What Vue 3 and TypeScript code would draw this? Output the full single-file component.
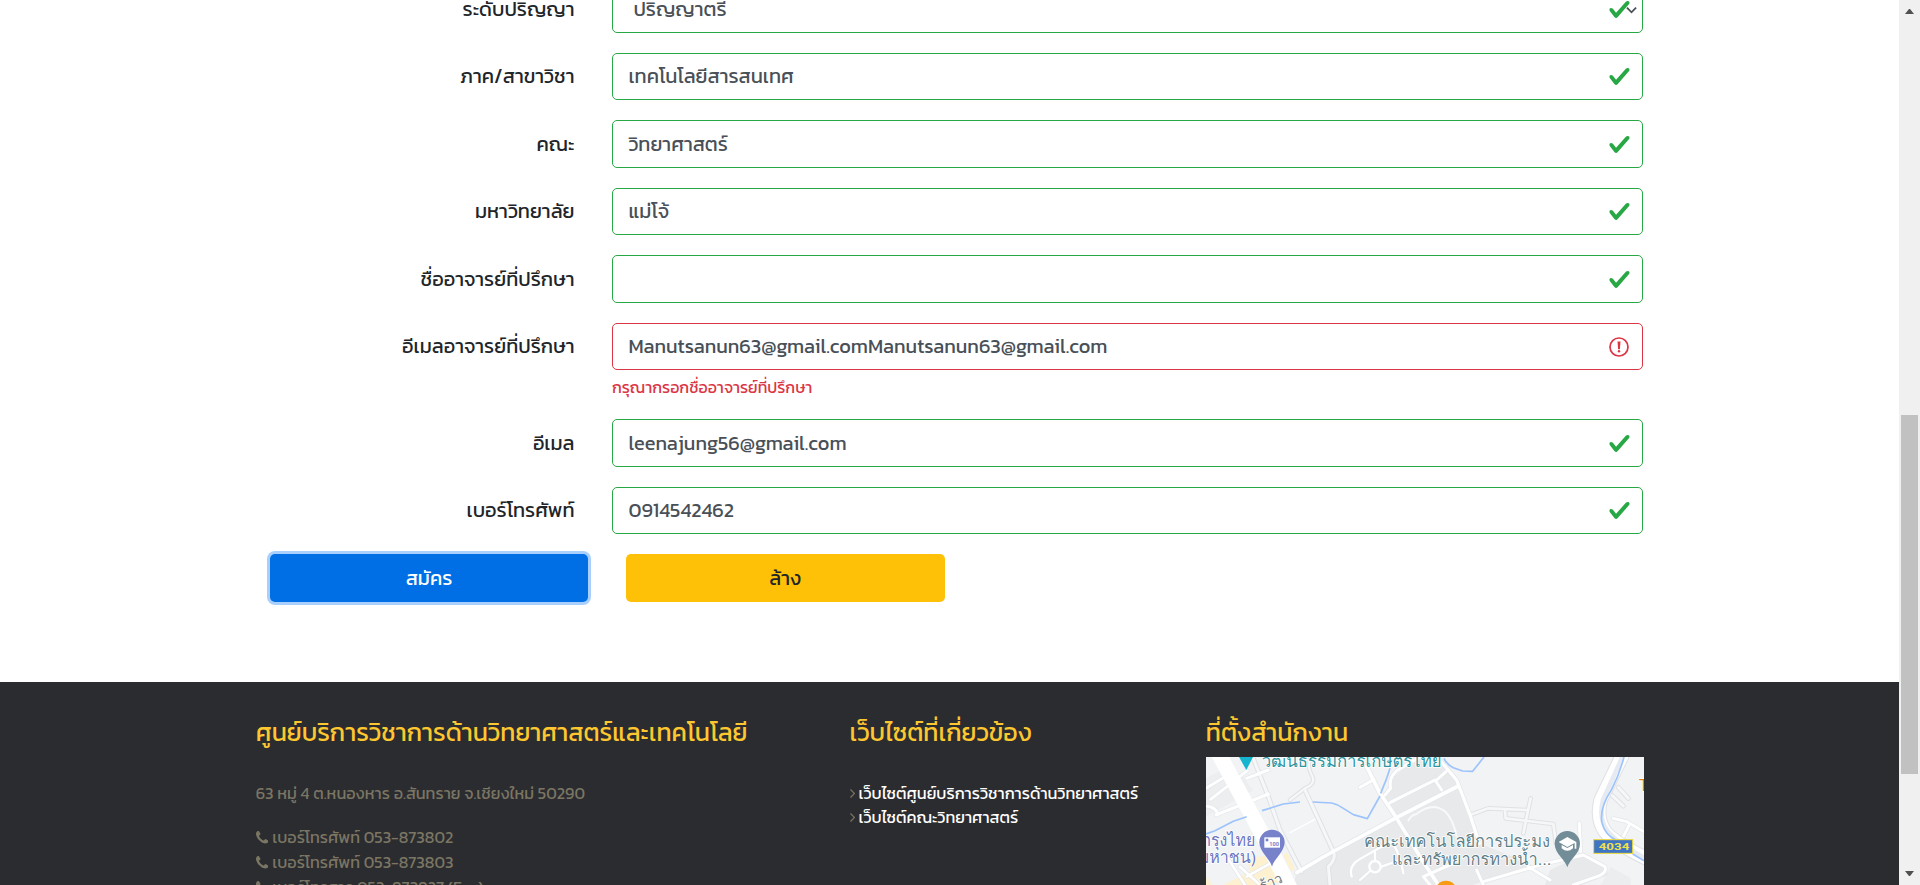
<script setup lang="ts">
interface Field {
  label: string
  value: string
  select?: boolean
  error?: string
}

interface Road {
  d: string
  width: number
}

const fields: Field[] = [
  { label: 'ระดับปริญญา', value: 'ปริญญาตรี', select: true },
  { label: 'ภาค/สาขาวิชา', value: 'เทคโนโลยีสารสนเทศ' },
  { label: 'คณะ', value: 'วิทยาศาสตร์' },
  { label: 'มหาวิทยาลัย', value: 'แม่โจ้' },
  { label: 'ชื่ออาจารย์ที่ปรึกษา', value: '' },
  {
    label: 'อีเมลอาจารย์ที่ปรึกษา',
    value: 'Manutsanun63@gmail.comManutsanun63@gmail.com',
    error: 'กรุณากรอกชื่ออาจารย์ที่ปรึกษา',
  },
  { label: 'อีเมล', value: 'leenajung56@gmail.com' },
  { label: 'เบอร์โทรศัพท์', value: '0914542462' },
]

const phones = [
  'เบอร์โทรศัพท์ 053-873802',
  'เบอร์โทรศัพท์ 053-873803',
  'เบอร์โทรสาร 053-873827 (Fax)',
]

const links = [
  'เว็บไซต์ศูนย์บริการวิชาการด้านวิทยาศาสตร์',
  'เว็บไซต์คณะวิทยาศาสตร์',
]

const lanes: Road[] = [
  { d: 'M188 171L235 290 270 390 335 515', width: 9 },
  { d: 'M345 270L430 455Q440 475 415 500L420 555', width: 9 },
  { d: 'M362 171Q350 200 365 225T345 265L300 300', width: 7 },
  { d: 'M840 345L895 325 1010 330M1022 295L1010 350 1000 400M945 330L947 355 1090 372 1098 430', width: 8 },
  { d: 'M1265 285L1300 318M1285 262L1315 295', width: 9 },
]

const streets: Road[] = [
  { d: 'M48 265L125 218 95 171M62 298L172 212M78 345L235 282M170 235L235 210M48 318Q78 322 82 340', width: 9 },
  { d: 'M150 500L210 555M110 470L165 555M170 530L260 480', width: 8 },
  { d: 'M320 518L410 465 615 355 805 258', width: 11 },
  { d: 'M530 200L570 280 620 355 690 470 745 555', width: 11 },
  { d: 'M510 262L552 238M585 285L602 265Q595 235 620 212L690 171', width: 9 },
  { d: 'M600 308L735 240 755 270M740 240L768 215', width: 9 },
  { d: 'M745 175L800 240 840 345 868 430', width: 10 },
  { d: 'M485 530Q475 500 505 480L600 425Q625 440 640 520M510 540L555 500M555 480V455M575 500L630 480', width: 7 },
  { d: 'M880 545L1050 495 1180 465 1245 500Q1252 520 1220 530L1150 555M1015 500L1080 540M720 555L700 530 790 490M860 510L880 555', width: 9 },
  { d: 'M1168 370L1172 455', width: 9 },
  { d: 'M1270 355L1310 365 1362 395M1320 370L1300 410', width: 9 },
]
</script>

<template>
  <div class="window">
    <div class="page">
      <main class="container form">
        <div v-for="field in fields" :key="field.label" class="row">
          <label class="label">{{ field.label }}</label>
          <div class="control">
            <div class="input" :class="{ invalid: field.error, select: field.select }">
              <span>{{ field.value }}</span>
              <svg v-if="field.error" class="alert" viewBox="0 0 20 20">
                <circle cx="10" cy="10" r="9" fill="none" stroke="#dc3545" stroke-width="1.7" />
                <path d="M8.5 4.6h3l-.6 7.6H9.1z" fill="#dc3545" />
                <circle cx="10" cy="14.3" r="1.2" fill="#dc3545" />
              </svg>
              <svg v-else class="check" viewBox="0 0 8 8">
                <path fill="#28a745" d="M2.3 6.73L.6 4.53c-.4-1.04.46-1.4 1.1-.8l1.1 1.4 3.4-3.8c.6-.63 1.6-.27 1.2.7l-4 4.6c-.43.5-.8.4-1.1.1z" />
              </svg>
              <svg v-if="field.select" class="chevron" viewBox="0 0 12 8">
                <path d="M1 1.500l5 5 5-5" fill="none" stroke="#495057" stroke-width="2" />
              </svg>
            </div>
            <div v-if="field.error" class="error">{{ field.error }}</div>
          </div>
        </div>
        <div class="buttons">
          <button class="btn primary" type="button">สมัคร</button>
          <button class="btn warning" type="button">ล้าง</button>
        </div>
      </main>

      <footer class="footer">
        <div class="container columns">
          <section class="about">
            <h5>ศูนย์บริการวิชาการด้านวิทยาศาสตร์และเทคโนโลยี</h5>
            <p class="address">63 หมู่ 4 ต.หนองหาร อ.สันทราย จ.เชียงใหม่ 50290</p>
            <p v-for="phone in phones" :key="phone" class="phone">
              <svg viewBox="0 0 1408 1408">
                <path fill="#7b7663" d="M1408 1112q0 27-10 70.500t-21 68.500q-21 50-122 106-94 51-186 51-27 0-53-3.500t-57.500-12.500-47-14.500-55.500-20.500-49-18q-98-35-175-83-127-79-264-216T152 776q-48-77-83-175-3-9-18-49t-20.500-55.500-14.500-47T3.500 392 0 339q0-92 51-186Q107 52 157 31q25-11 68.500-21T296 0q14 0 21 3 18 6 53 76 11 19 30 54t35 63.500 31 53.500q3 4 17.500 25t21.500 35.500 7 28.500q0 20-28.500 50t-62 55-62 53-28.500 46q0 9 5 22.500t8.500 20.500 14 24 11.500 19q76 137 174 235t235 174q2 1 19 11.500t24 14 20.500 8.500 22.500 5q18 0 46-28.500t53-62 55-62 50-28.500q14 0 28.500 7t35.500 21.500 25 17.500q25 15 53.500 31t63.500 35 54 30q70 35 76 53 3 7 3 21z" />
              </svg>
              <span>{{ phone }}</span>
            </p>
          </section>
          <section class="sites">
            <h5>เว็บไซต์ที่เกี่ยวข้อง</h5>
            <ul>
              <li v-for="link in links" :key="link">
                <svg viewBox="0 0 5 9"><path d="M.5.5l4 4-4 4" fill="none" stroke="#7b7663" stroke-width="1.2" /></svg>
                <a>{{ link }}</a>
              </li>
            </ul>
          </section>
          <section class="office">
            <h5>ที่ตั้งสำนักงาน</h5>
            <svg class="map" viewBox="48 171 1314 384">
              <rect x="48" y="171" width="1314" height="384" fill="#f1f3f4" />
              <g fill="#e8e9eb">
                <path d="M600 240l85-69h60l55 69 68 190 100 40 50 25-170 60H310l10-37 300-163-35-60z" />
                <path d="M1080 510l100-45 65 35 10 25-80 30h-110z" />
                <path d="M48 235l77-40 65 75-142 80z" opacity=".5" />
                <path d="M1262 500l60 35v20h-90z" opacity=".6" />
              </g>
              <path d="M170 478l60-12 60 60-40 29H100l80-40zM280 465l12-8 22 50-10 8zM48 530l20 25H48z" fill="#fdf1cf" />
              <g fill="none" stroke-linecap="round" stroke-linejoin="round">
                <path v-for="road in lanes" :key="`edge-${road.d}`" :d="road.d" :stroke-width="road.width + 6" stroke="#dfe1e4" />
                <path v-for="road in streets" :key="`edge-${road.d}`" :d="road.d" :stroke-width="road.width + 4" stroke="#e3e5e8" />
                <path v-for="road in lanes" :key="road.d" :d="road.d" :stroke-width="road.width" stroke="#f6f7f8" />
                <path v-for="road in streets" :key="road.d" :d="road.d" :stroke-width="road.width" stroke="#fff" />
                <path d="M655 362Q663 345 680 342 730 303 768 337 790 360 800 410" stroke="#f8f9fa" stroke-width="6" />
                <path d="M80 150L180 335 250 465 305 575" stroke="#fff" stroke-width="46" />
                <path d="M300 398L375 358" stroke="#fff" stroke-width="4" />
                <path d="M1300 160L1232 300Q1218 355 1245 395 1275 430 1375 478" stroke="#dfe1e4" stroke-width="44" />
                <path d="M1300 160L1232 300Q1218 355 1245 395 1275 430 1375 478" stroke="#fff" stroke-width="38" />
                <path d="M1302 160L1239 300Q1226 355 1250 390 1280 430 1375 480" stroke="#e6ebf2" stroke-width="14" />
              </g>
              <circle cx="555" cy="500" r="17" fill="#e8e9eb" stroke="#fff" stroke-width="7" />
              <g fill="none" stroke="#9dc3fc" stroke-width="5" stroke-linejoin="round">
                <path d="M48 402L75 392 130 364 170 350M216 332L280 312 330 306M368 306L425 309Q445 313 460 325L490 344 532 356 570 288M572 280L590 235 600 205M762 175Q770 193 790 203L818 213 848 214 882 171" />
                <path d="M1302 171Q1288 225 1264 270 1228 325 1236 368 1245 405 1278 420M1328 462L1362 482" />
              </g>
              <path d="M147 171h42l-20 39z" fill="#16b5cf" />
              <g class="place" font-size="50">
                <text x="215" y="202" textLength="540" lengthAdjust="spacingAndGlyphs" fill="#2e959e">วัฒนธรรมการเกษตรไทย</text>
                <text x="34" y="438" textLength="162" lengthAdjust="spacingAndGlyphs" fill="#6d76bf">กรุงไทย</text>
                <text x="26" y="490" textLength="172" lengthAdjust="spacingAndGlyphs" fill="#6d76bf">มหาชน)</text>
                <text x="522" y="442" textLength="558" lengthAdjust="spacingAndGlyphs" fill="#627f87">คณะเทคโนโลยีการประมง</text>
                <text x="606" y="494" textLength="478" lengthAdjust="spacingAndGlyphs" fill="#627f87">และทรัพยากรทางน้ำ...</text>
                <text x="216" y="572" font-size="42" fill="#777" transform="rotate(-22 216 572)">ร้าว</text>
                <text class="initial" x="1346" y="274" font-size="50" fill="#e07d13">T</text>
              </g>
              <path d="M246 500c-5-22-38-44-38-73a38 38 0 0 1 76 0c0 29-33 51-38 73z" fill="#7882cb" />
              <rect x="223" y="412" width="47" height="31" fill="#fff" />
              <path d="M227 416h8v8h-8z" fill="#7882cb" />
              <text class="bill" x="238" y="439" font-size="17" fill="#7882cb">100</text>
              <path d="M1132 502c-5-22-38-41-38-71a38 38 0 0 1 76 0c0 30-33 49-38 71z" fill="#738d98" />
              <path d="M1132 411l27 15v20h-5v-17l-22 12-26-15zM1115 435l17 9 17-9v10q-17 15-34 0z" fill="#fff" />
              <rect x="1211" y="419" width="117" height="41" fill="#3f73c4" stroke="#f0dc34" stroke-width="3" />
              <text class="route" x="1226" y="450" textLength="92" lengthAdjust="spacingAndGlyphs" font-size="29" fill="#f1e04b">4034</text>
              <circle cx="768" cy="575" r="33" fill="#f79b12" />
            </svg>
          </section>
        </div>
      </footer>
    </div>
    <div class="scrollbar">
      <svg class="arrow" viewBox="0 0 9 5"><path d="M0 5l4-5h1l4 5z" fill="#505050" /></svg>
      <div class="thumb"></div>
      <svg class="arrow" viewBox="0 0 9 5"><path d="M0 0h9L5 5H4z" fill="#505050" /></svg>
    </div>
  </div>
</template>

<style>
html,
body {
  overflow: hidden;
}
</style>

<style scoped>
* {
  box-sizing: border-box;
}
.window {
  display: flex;
  width: 1920px;
  height: 885px;
  overflow: hidden;
  background: #fff;
  color: #212529;
  font-family: Kanit, "Noto Sans Thai", "Noto Sans", sans-serif;
  font-size: 20px;
  line-height: 30px;
}
.page {
  display: flex;
  flex-direction: column;
  width: 1899px;
  height: 885px;
  overflow: hidden;
}
.container {
  width: 1425px;
  margin: 0 auto;
  padding: 0 18.75px;
}
.form {
  flex: none;
  height: 696.9px;
  margin-top: -14.9px;
}
.row {
  display: flex;
  gap: 37.5px;
  margin-bottom: 20px;
}
.label {
  width: 318.75px;
  padding-top: 8.75px;
  text-align: right;
}
.control {
  flex: 1;
}
.input {
  display: flex;
  align-items: center;
  position: relative;
  height: 47.5px;
  padding: 0 15.4px;
  border: 1px solid #28a745;
  border-radius: 5px;
  color: #495057;
}
.input.select {
  padding-left: 20.4px;
}
.input.invalid {
  border-color: #dc3545;
}
.check,
.alert {
  position: absolute;
  top: 11.5px;
  right: 11px;
  width: 23px;
  height: 23px;
}
.alert {
  top: 13px;
  right: 13px;
  width: 20px;
  height: 20px;
}
.chevron {
  position: absolute;
  top: 20px;
  right: 5.5px;
  width: 11px;
  height: 8px;
}
.error {
  height: 24px;
  margin-top: 5px;
  color: #dc3545;
  font-size: 16px;
  line-height: 24px;
}
.buttons {
  display: flex;
  gap: 37.75px;
  padding-left: 14px;
}
.btn {
  width: 318.5px;
  height: 48px;
  padding: 0;
  border: 0;
  border-radius: 5px;
  font: inherit;
}
.primary {
  background: #006fe6;
  box-shadow: 0 0 0 3px #a9d0fd;
  color: #fff;
}
.warning {
  background: #ffc107;
  color: #212529;
}
.footer {
  flex: 1;
  background: #2b2c30;
  color: #7b7663;
  font-size: 16.25px;
}
.columns {
  display: flex;
  padding-top: 35px;
}
.about {
  flex: none;
  width: 593.75px;
}
.sites {
  flex: none;
  width: 356.25px;
}
.office {
  flex: none;
  width: 438px;
}
h5 {
  height: 30px;
  margin: 0;
  color: #fdc72f;
  font-size: 25px;
  font-weight: 400;
  line-height: 30px;
  white-space: nowrap;
}
.address {
  height: 24px;
  margin: 34px 0 20px;
  line-height: 24px;
}
.phone {
  display: flex;
  align-items: center;
  gap: 4px;
  height: 25px;
  margin: 0;
  line-height: 25px;
}
.phone svg {
  width: 12.5px;
  height: 12.5px;
}
ul {
  margin: 34px 0 0;
  padding: 0;
  list-style: none;
}
li {
  display: flex;
  align-items: center;
  gap: 4px;
  height: 24px;
  line-height: 24px;
}
li svg {
  width: 5px;
  height: 9px;
}
a {
  color: #fff;
  white-space: nowrap;
}
.map {
  display: block;
  width: 438px;
  height: 128px;
  margin-top: 10px;
}
.place {
  font-family: Loma, Garuda, Waree, "Noto Looped Thai", "Noto Sans Thai Looped", Sarabun, "Noto Serif Thai", "Liberation Serif", serif;
  paint-order: stroke;
  stroke: #fff;
  stroke-width: 5px;
}
.initial {
  font-family: Roboto, sans-serif;
}
.route,
.bill {
  font-family: Roboto, sans-serif;
  font-weight: 700;
}
.scrollbar {
  display: flex;
  flex-direction: column;
  align-items: center;
  justify-content: space-between;
  width: 21px;
  height: 885px;
  padding: 9px 0;
  background: #f0f0f0;
}
.arrow {
  width: 9px;
  height: 5px;
}
.thumb {
  width: 17px;
  height: 359px;
  margin-top: 304px;
  background: #c1c1c1;
}
</style>
